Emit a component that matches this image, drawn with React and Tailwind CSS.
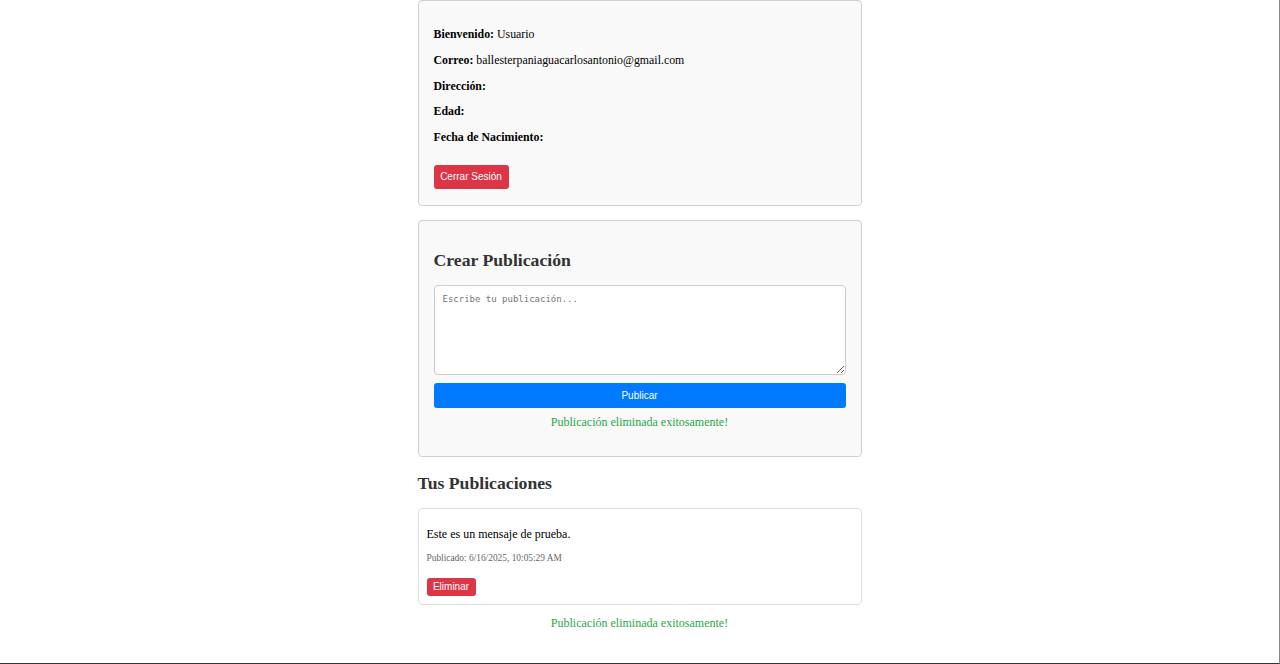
export default function App() {
  const serif = { fontFamily: '"Liberation Serif", "Times New Roman", serif' };
  const sans = { fontFamily: '"Liberation Sans", Arial, sans-serif' };

  return (
    <div
      className="h-[664px] w-full bg-white border-b border-r border-b-[#333] border-r-[#888] overflow-hidden"
      style={serif}
    >
      <div className="w-[444px] mx-auto">
        {/* Perfil */}
        <div className="bg-[#f9f9f9] border border-[#cfcfcf] rounded-[4px] px-[15px] pt-[21px] pb-[16px] text-[11.85px] text-black">
          <p className="leading-[25.8px]">
            <b>Bienvenido:</b> Usuario
          </p>
          <p className="leading-[25.8px]">
            <b>Correo:</b> ballesterpaniaguacarlosantonio@gmail.com
          </p>
          <p className="leading-[25.8px]">
            <b>Dirección:</b>
          </p>
          <p className="leading-[25.8px]">
            <b>Edad:</b>
          </p>
          <p className="leading-[25.8px]">
            <b>Fecha de Nacimiento:</b>
          </p>
          <button
            className="mt-[14px] h-[24px] w-[75px] bg-[#dc3545] text-white text-[10px] rounded-[3px]"
            style={sans}
          >
            Cerrar Sesión
          </button>
        </div>

        {/* Crear publicación */}
        <div className="mt-[14px] bg-[#f9f9f9] border border-[#cfcfcf] rounded-[4px] px-[15px] pt-[29px] pb-[26px]">
          <h2 className="text-[17.7px] leading-[20px] font-bold text-[#333]">
            Crear Publicación
          </h2>
          <textarea
            className="mt-[15px] block w-full h-[90px] bg-white border border-[#ccc] rounded-[4px] px-[8px] py-[7px] text-[9px] placeholder:text-[#757575] outline-none"
            style={{ fontFamily: '"DejaVu Sans Mono", "Liberation Mono", monospace' }}
            placeholder="Escribe tu publicación..."
          />
          <button
            className="mt-[8px] block w-full h-[25px] bg-[#007bff] text-white text-[10px] rounded-[3px]"
            style={sans}
          >
            Publicar
          </button>
          <p className="mt-[6px] text-center text-[12px] leading-[16px] text-[#28a745]">
            Publicación eliminada exitosamente!
          </p>
        </div>

        {/* Lista */}
        <h2 className="mt-[16px] text-[17.7px] leading-[20px] font-bold text-[#333]">
          Tus Publicaciones
        </h2>
        <div className="mt-[15px] bg-white border border-[#ddd] rounded-[4px] px-[8px] pt-[17px] pb-[7px]">
          <p className="text-[12px] leading-[16px] text-black">
            Este es un mensaje de prueba.
          </p>
          <p className="mt-[10px] text-[9.4px] leading-[12px] text-[#666]">
            Publicado: 6/16/2025, 10:05:29 AM
          </p>
          <button
            className="mt-[14px] h-[18px] w-[49px] bg-[#dc3545] text-white text-[10px] rounded-[3px]"
            style={sans}
          >
            Eliminar
          </button>
        </div>
        <p className="mt-[10px] text-center text-[12px] leading-[16px] text-[#28a745]">
          Publicación eliminada exitosamente!
        </p>
      </div>
    </div>
  );
}
